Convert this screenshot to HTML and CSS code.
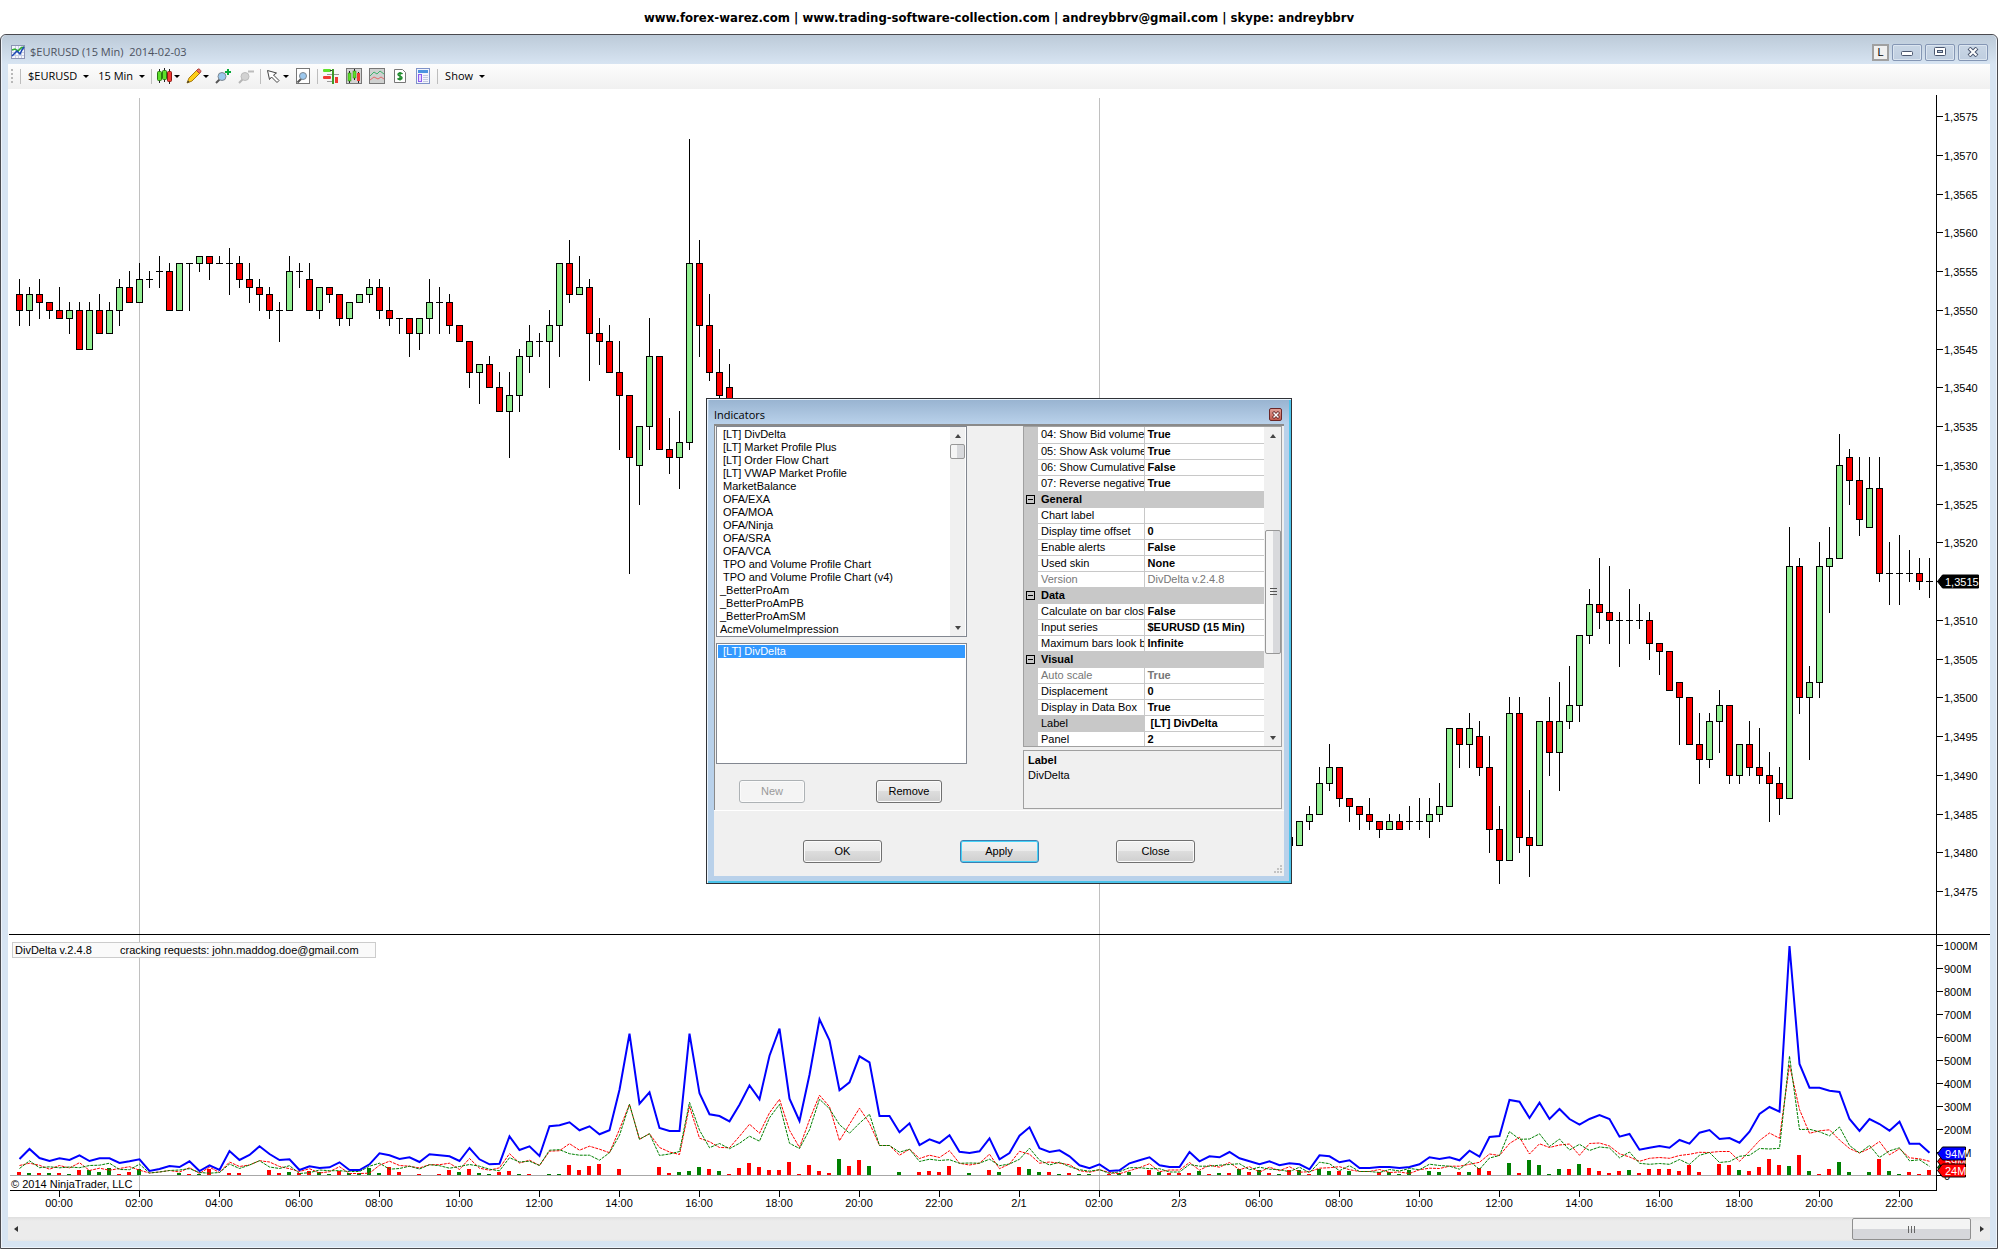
FILE: index.html
```html
<!DOCTYPE html>
<html lang="en">
<head>
<meta charset="utf-8">
<title>$EURUSD (15 Min) 2014-02-03</title>
<link rel="stylesheet" href="styles.css">
</head>
<body>
<header class="banner">www.forex-warez.com | www.trading-software-collection.com | andreybbrv@gmail.com | skype: andreybbrv</header>
<main class="window">
  <div class="titlebar">
    <svg class="app-icon" width="14" height="14" viewBox="0 0 14 14"><rect x=".5" y=".5" width="13" height="13" fill="#f4f6fc" stroke="#8d93b4"/><path d="M1 4.500H13M1 7.500H13M1 10.500H13M4.500 1V13M7.500 1V13M10.500 1V13" stroke="#c9cfe4"/><path d="M1 5l3-1 3 2 3-3 3-1" fill="none" stroke="#2eae2e" stroke-width="1.500"/><path d="M1 11l3-3 2-2 3 3 2-4 2-3" fill="none" stroke="#1b46b5" stroke-width="1.500"/></svg>
    <h1 class="title">$EURUSD (15 Min)&nbsp; 2014-02-03</h1>
    <div class="window-buttons">
      <button class="link-button" type="button">L</button>
      <button class="frame-button" type="button" aria-label="Minimize"><svg width="12" height="10" viewBox="0 0 12 10"><rect x=".5" y="4.500" width="11" height="4" rx="1" fill="#fff" stroke="#4a566e"/></svg></button>
      <button class="frame-button" type="button" aria-label="Maximize"><svg width="12" height="10" viewBox="0 0 12 10"><rect x=".5" y=".5" width="11" height="8" rx="1" fill="#fff" stroke="#4a566e"/><rect x="3.500" y="3.500" width="5" height="2" fill="#b9c9dc" stroke="#4a566e"/></svg></button>
      <button class="frame-button" type="button" aria-label="Close window"><svg width="12" height="10" viewBox="0 0 12 10"><path d="M2 1l8 8M10 1l-8 8" stroke="#4a566e" stroke-width="4"/><path d="M2.500 1.500l7 7M9.500 1.500l-7 7" stroke="#fff" stroke-width="2"/></svg></button>
    </div>
  </div>

  <div class="client">
    <div class="toolbar" role="toolbar">
      <span class="grip"></span><span class="sep"></span>
      <button class="tool text" type="button">$EURUSD<i class="arrow"></i></button>
      <button class="tool text" type="button">15 Min<i class="arrow"></i></button>
      <span class="sep"></span>
      <button class="tool menu" type="button" aria-label="Chart style"><svg width="16" height="16" viewBox="0 0 16 16"><path d="M2.500 1V15M7.500 0V14M12.500 1V16" stroke="#222"/><rect x=".5" y="3.500" width="4" height="9" rx="1" fill="#5ee02a" stroke="#2a7a12"/><rect x="5.500" y="2.500" width="4" height="9" rx="1" fill="#5ee02a" stroke="#2a7a12"/><rect x="10.500" y="3.500" width="4" height="10" rx="1" fill="#f03a34" stroke="#8e1712"/></svg><i class="arrow"></i></button>
      <button class="tool menu" type="button" aria-label="Drawing tools"><svg width="16" height="16" viewBox="0 0 16 16"><path d="M1 15l2-5L11 2l3 3-8 8z" fill="#ffcf1a" stroke="#a87a10"/><path d="M10.500 2.500L12 1c1-.6 3.400 1.200 2.800 2.800L13.500 5.500z" fill="#f0705a" stroke="#a8403a"/><path d="M1 15l1-2.600L3.600 14z" fill="#333"/></svg><i class="arrow"></i></button>
      <button class="tool" type="button" aria-label="Zoom in"><svg width="16" height="16" viewBox="0 0 16 16"><path d="M1 15l4-4" stroke="#555" stroke-width="2"/><circle cx="7" cy="8.500" r="4" fill="#9cc8ee" stroke="#7d8791"/><path d="M13 1v6M10 4h6" stroke="#08a83a" stroke-width="2"/></svg></button>
      <button class="tool" type="button" aria-label="Zoom out" disabled><svg width="16" height="16" viewBox="0 0 16 16"><path d="M1 15l4-4" stroke="#b5b5b5" stroke-width="2"/><circle cx="7" cy="8.500" r="4" fill="#d2d2d2" stroke="#bcbcbc"/><path d="M10 3.500h6" stroke="#bdbdbd" stroke-width="2"/></svg></button>
      <span class="sep"></span>
      <button class="tool menu" type="button" aria-label="Cursor"><svg width="16" height="16" viewBox="0 0 16 16"><path d="M1.500 2.500l9 2.500-3 2 5.500 5.500-2 2L5.500 9l-2 2.500z" fill="#fff" stroke="#444"/></svg><i class="arrow"></i></button>
      <button class="tool" type="button" aria-label="Preview"><svg width="16" height="16" viewBox="0 0 16 16"><rect x="1.500" y=".5" width="13" height="15" fill="#fff" stroke="#777"/><path d="M2.500 14.500l4-4" stroke="#555" stroke-width="2"/><circle cx="8" cy="8" r="3.500" fill="#9cc8ee" stroke="#7d8791"/></svg></button>
      <span class="sep"></span>
      <button class="tool" type="button" aria-label="Chart trader"><svg width="16" height="16" viewBox="0 0 16 16"><path d="M4 6.500H16M4 13.500H11" stroke="#999"/><rect x="0" y="1" width="8" height="3" rx="1" fill="#5ee02a"/><rect x="0" y="8" width="8" height="3" rx="1" fill="#f03a34"/><path d="M9 1h2v15h-2z" fill="#3f9a28"/><path d="M7 2.500h2" stroke="#333"/><rect x="12" y="9" width="3" height="6" fill="#f03a34"/></svg></button>
      <button class="tool" type="button" aria-label="Data series"><svg width="16" height="16" viewBox="0 0 16 16"><rect x=".5" y=".5" width="15" height="15" fill="#d4d4d4" stroke="#777"/><path d="M3.500 3v12M8.500 1v11M12.500 4v11" stroke="#222"/><rect x="2" y="5" width="3" height="8" fill="#5ee02a" stroke="#2a7a12" stroke-width=".5"/><rect x="7" y="3" width="3" height="7" fill="#5ee02a" stroke="#2a7a12" stroke-width=".5"/><rect x="11" y="5" width="3" height="8" fill="#f03a34"/></svg></button>
      <button class="tool" type="button" aria-label="Indicators"><svg width="16" height="16" viewBox="0 0 16 16"><rect x=".5" y=".5" width="15" height="15" fill="#cfd1d0" stroke="#777"/><path d="M1 8l4-4 3 2 3-3 4 3" fill="none" stroke="#3fb36d"/><path d="M1 12l4-3 4 2 3-2 3 2" fill="none" stroke="#e46b6b"/></svg></button>
      <button class="tool" type="button" aria-label="Strategies"><svg width="16" height="16" viewBox="0 0 16 16"><path d="M2.500 1.500h8l3 3v10h-11z" fill="#fff" stroke="#777"/><path d="M10.500 6C9 4.600 6 4.800 6 6.600c0 2 4 1.200 4 3.200 0 2-3 2-4.500.6M8 4v8.500" fill="none" stroke="#1e8a2c" stroke-width="1.500"/></svg></button>
      <button class="tool" type="button" aria-label="Properties"><svg width="16" height="16" viewBox="0 0 16 16"><rect x="1.500" y=".5" width="13" height="15" fill="#f3f5fd" stroke="#7f93c8"/><rect x="3" y="2" width="10" height="3" fill="#4b93e0"/><rect x="3.500" y="6.500" width="3" height="7" fill="#e6d8ff" stroke="#8c5cf0"/><path d="M8 7.500h5M8 9.500h5M8 11.500h5M8 13.500h5" stroke="#c2cadf"/></svg></button>
      <span class="sep"></span>
      <button class="tool text" type="button">Show<i class="arrow"></i></button>
    </div>

    <div class="chart" id="chart"></div>

    <div class="h-scroll">
      <i class="tri left"></i>
      <span class="h-track"><span class="h-thumb"></span></span>
      <i class="tri right"></i>
    </div>
  </div>

  <section class="dialog" role="dialog" aria-labelledby="dialog-title">
    <div class="dialog-title">
      <h2 id="dialog-title">Indicators</h2>
      <button class="dialog-close" type="button" aria-label="Close dialog"><svg width="8" height="8" viewBox="0 0 8 8"><path d="M1 1l6 6M7 1l-6 6" stroke="#5a2020" stroke-width="3"/><path d="M1.500 1.500l5 5M6.500 1.500l-5 5" stroke="#fff" stroke-width="1.500"/></svg></button>
    </div>
    <div class="dialog-body">
      <div class="panes">
        <div class="lists">
          <div class="listbox available">
            <ul role="listbox" aria-label="Available indicators">
              <li>&nbsp;[LT] DivDelta</li><li>&nbsp;[LT] Market Profile Plus</li><li>&nbsp;[LT] Order Flow Chart</li><li>&nbsp;[LT] VWAP Market Profile</li><li>&nbsp;MarketBalance</li><li>&nbsp;OFA/EXA</li><li>&nbsp;OFA/MOA</li><li>&nbsp;OFA/Ninja</li><li>&nbsp;OFA/SRA</li><li>&nbsp;OFA/VCA</li><li>&nbsp;TPO and Volume Profile Chart</li><li>&nbsp;TPO and Volume Profile Chart (v4)</li><li>_BetterProAm</li><li>_BetterProAmPB</li><li>_BetterProAmSM</li><li>AcmeVolumeImpression</li>
            </ul>
            <div class="v-scroll"><i class="tri up"></i><span class="v-track"><span class="v-thumb short"></span></span><i class="tri down"></i></div>
          </div>
          <div class="listbox applied">
            <ul role="listbox" aria-label="Applied indicators"><li class="selected">&nbsp;[LT] DivDelta</li></ul>
          </div>
          <div class="list-actions">
            <button class="button small" type="button" disabled>New</button>
            <button class="button small" type="button">Remove</button>
          </div>
        </div>
        <div class="props">
          <div class="grid-frame">
            <table class="grid">
              <tbody>
                <tr><td class="gutter"></td><th>04: Show Bid volume</th><td>True</td></tr>
                <tr><td class="gutter"></td><th>05: Show Ask volume</th><td>True</td></tr>
                <tr><td class="gutter"></td><th>06: Show Cumulative</th><td>False</td></tr>
                <tr><td class="gutter"></td><th>07: Reverse negative</th><td>True</td></tr>
                <tr class="group"><td class="gutter"><i class="minus"></i></td><th colspan="2">General</th></tr>
                <tr><td class="gutter"></td><th>Chart label</th><td></td></tr>
                <tr><td class="gutter"></td><th>Display time offset</th><td>0</td></tr>
                <tr><td class="gutter"></td><th>Enable alerts</th><td>False</td></tr>
                <tr><td class="gutter"></td><th>Used skin</th><td>None</td></tr>
                <tr class="locked plain"><td class="gutter"></td><th>Version</th><td>DivDelta v.2.4.8</td></tr>
                <tr class="group"><td class="gutter"><i class="minus"></i></td><th colspan="2">Data</th></tr>
                <tr><td class="gutter"></td><th>Calculate on bar close</th><td>False</td></tr>
                <tr><td class="gutter"></td><th>Input series</th><td>$EURUSD (15 Min)</td></tr>
                <tr><td class="gutter"></td><th>Maximum bars look back</th><td>Infinite</td></tr>
                <tr class="group"><td class="gutter"><i class="minus"></i></td><th colspan="2">Visual</th></tr>
                <tr class="locked"><td class="gutter"></td><th>Auto scale</th><td>True</td></tr>
                <tr><td class="gutter"></td><th>Displacement</th><td>0</td></tr>
                <tr><td class="gutter"></td><th>Display in Data Box</th><td>True</td></tr>
                <tr class="current"><td class="gutter"></td><th>Label</th><td>&nbsp;[LT] DivDelta</td></tr>
                <tr><td class="gutter"></td><th>Panel</th><td>2</td></tr>
              </tbody>
            </table>
            <div class="v-scroll"><i class="tri up"></i><span class="v-track"><span class="v-thumb long"></span></span><i class="tri down"></i></div>
          </div>
          <div class="hint"><b>Label</b><p>DivDelta</p></div>
        </div>
      </div>
      <div class="dialog-actions">
        <button class="button" type="button">OK</button>
        <button class="button default" type="button">Apply</button>
        <button class="button" type="button">Close</button>
        <svg class="size-grip" width="9" height="9" viewBox="0 0 9 9"><path d="M6 0h2v2h-2zM3 3h2v2h-2zM6 3h2v2h-2zM0 6h2v2h-2zM3 6h2v2h-2zM6 6h2v2h-2z" fill="#c3c3c3"/></svg>
      </div>
    </div>
  </section>
</main>
<script src="chart.js"></script>
</body>
</html>
```
FILE: styles.css
```css
* { box-sizing: border-box; }

body {
  margin: 0;
  min-height: 100vh;
  display: flex;
  flex-direction: column;
  background: #fff;
  color: #000;
  font: 11px/13px "Liberation Sans", Arial, sans-serif;
}

h1, h2, p, ul { margin: 0; padding: 0; font-size: inherit; font-weight: normal; }
ul { list-style: none; }
button { font: inherit; color: inherit; padding: 0; margin: 0; }
svg { display: block; }

.banner {
  height: 34px;
  line-height: 36px;
  text-align: center;
  font-family: "DejaVu Sans Condensed", "DejaVu Sans", sans-serif;
  font-weight: bold;
  font-size: 13px;
}

/* main window frame */
.window {
  position: relative;
  flex: 1;
  display: flex;
  flex-direction: column;
  padding: 0 7px 7px;
  border: 1px solid #4a4a4f;
  border-radius: 6px 6px 0 0;
  background: #d7e4f2;
  box-shadow: inset 0 0 0 1px #eef3fa;
}

.titlebar {
  display: flex;
  align-items: center;
  gap: 5px;
  height: 29px;
  margin: 0 -6px;
  padding: 5px 8px 0 9px;
  border-radius: 5px 5px 0 0;
  background: linear-gradient(#bccad8, #d7e4f2);
  color: #4c5260;
}
.title { flex: 1; font: 11px/16px "Open Sans", "Noto Sans", sans-serif; }

.window-buttons { display: flex; align-items: center; gap: 3px; }
.link-button {
  width: 17px;
  height: 17px;
  border: 2px solid #a0a0a0;
  background: #f0f0f0;
  color: #000;
}
.frame-button {
  display: grid;
  place-items: center;
  width: 30px;
  height: 17px;
  border: 1px solid #8496b4;
  border-radius: 2px;
  background: linear-gradient(#c9d6e5, #bfcee0);
  box-shadow: inset 0 0 0 1px #dbe5f0;
}

.client { flex: 1; display: flex; flex-direction: column; background: #fff; }

/* toolbar */
.toolbar {
  display: flex;
  align-items: center;
  height: 25px;
  padding-bottom: 1px;
  background: linear-gradient(#fdfdfd, #f0f0f0);
  font: 11px/16px "Open Sans", "Noto Sans", sans-serif;
}
.grip { width: 2px; height: 14px; margin: 0 5px 0 3px; background: repeating-linear-gradient(#b8b8b8 0 2px, transparent 2px 4px); }
.sep { width: 1px; height: 15px; margin: 0 2px; background: #bdbdbd; }
.tool { display: flex; align-items: center; height: 22px; padding: 0 4px 0 3px; border: 0; background: none; }
.tool.menu { gap: 1px; padding: 0 3px; }
.tool.text { gap: 6px; padding: 0 4px 0 5px; }
.arrow { border: 3px solid transparent; border-top-color: #000; border-bottom: 0; }

.chart { flex: 1; min-height: 700px; overflow: hidden; }

/* scroll bars */
.tri { width: 0; height: 0; border: 3px solid transparent; }
.tri.left { border-right: 4px solid #333; border-left: 0; }
.tri.right { border-left: 4px solid #333; border-right: 0; }
.tri.up { border-bottom: 4px solid #444; border-top: 0; }
.tri.down { border-top: 4px solid #444; border-bottom: 0; }

.h-scroll {
  display: flex;
  align-items: center;
  gap: 9px;
  height: 24px;
  padding: 0 6px;
  background: linear-gradient(#dedede, #ececec 4px 22px, #e6e6e6);
}
.h-track { flex: 1; display: flex; justify-content: flex-end; }
.h-thumb {
  width: 119px;
  height: 22px;
  border: 1px solid #8f8f8f;
  border-radius: 2px;
  background:
    repeating-linear-gradient(90deg, #666 0 1px, transparent 1px 3px) center / 8px 7px no-repeat,
    linear-gradient(#f4f4f4 50%, #d6d7db 50%);
}
.v-scroll {
  display: flex;
  flex-direction: column;
  align-items: center;
  gap: 6px;
  width: 15px;
  padding: 7px 0 6px;
  background: #f0f0f0;
}
.v-track { flex: 1; width: 100%; }
.v-thumb { display: block; border: 1px solid #979797; border-radius: 2px; background: linear-gradient(90deg, #f5f5f5 50%, #d8d9dc 50%); }
.v-thumb.short { height: 15px; }
.v-thumb.long {
  height: 124px;
  margin-top: 86px;
  background:
    repeating-linear-gradient(#555 0 1px, transparent 1px 3px) center / 7px 8px no-repeat,
    linear-gradient(90deg, #f5f5f5 50%, #d8d9dc 50%);
}

/* indicators dialog */
.dialog {
  position: absolute;
  top: 363px;
  left: calc(50% - 293px);
  width: 586px;
  padding: 0 7px 7px;
  border: 1px solid #2f3237;
  background: #b9d1ea;
  box-shadow: inset 1px 1px 0 #eaf4fd, inset -2px -2px 0 #4cc3ea;
}
.dialog-title {
  display: flex;
  align-items: center;
  justify-content: space-between;
  height: 24px;
  margin: 1px -5px 0;
  padding: 5px 7px 0 5px;
  background: linear-gradient(#99b4d1, #b9d1ea);
  font: 11px/16px "Open Sans", "Noto Sans", sans-serif;
}
.dialog-close {
  display: grid;
  place-items: center;
  width: 13px;
  height: 13px;
  border: 1px solid #6b2626;
  border-radius: 2px;
  background: linear-gradient(#e0a097, #c25a4c);
}
.dialog-body { background: #f0f0f0; }
.panes {
  display: flex;
  justify-content: space-between;
  padding: 0 2px 0 1px;
  border: solid #8a8a8a;
  border-width: 2px 0 0 1px;
}
.lists { width: 251px; }
.listbox { display: flex; border: 1px solid #828790; background: #fff; }
.listbox ul { flex: 1; padding: 1px; }
.listbox li { padding-left: 2px; height: 13px; white-space: nowrap; }
.available { height: 211px; padding: 0 1px 0 0; }
.applied { height: 121px; margin-top: 6px; }
.applied li.selected { background: #39f; color: #fff; }
.list-actions { display: flex; gap: 71px; padding: 16px 0 6px 23px; }

.button {
  width: 79px;
  height: 23px;
  border: 1px solid #707070;
  border-radius: 3px;
  background: linear-gradient(#f2f2f2, #ebebeb 50%, #dddddd 50%, #cfcfcf);
  box-shadow: inset 0 0 0 1px #fbfbfb;
}
.button.small { width: 66px; }
.button:disabled { border-color: #adb2b5; background: #f4f4f4; color: #9a9a9a; }
.button.default { border-color: #3c7fb1; box-shadow: inset 0 0 0 1px #46d2f8; }

.props { width: 259px; display: flex; flex-direction: column; gap: 3px; padding-bottom: 1px; }
.grid-frame { display: flex; height: 321px; overflow: hidden; border: 1px solid #a0a0a0; }
.grid-frame .v-scroll { width: 16px; margin-left: 1px; }
.grid { flex: 1; table-layout: fixed; border-collapse: collapse; width: 240px; }
.grid tr { height: 16px; }
.grid th, .grid td {
  height: 16px;
  padding: 0 0 0 3px;
  border-bottom: 1px solid #c8c8c8;
  background: #fff;
  text-align: left;
  line-height: 13px;
  white-space: nowrap;
  overflow: hidden;
}
.grid th { width: 106px; font-weight: normal; border-right: 1px solid #c8c8c8; }
.grid td { font-weight: bold; }
.grid .gutter { width: 14px; padding: 0 0 0 2px; background: #c8c8c8; }
.grid .group th { background: #c8c8c8; font-weight: bold; }
.grid .current th { background: #c8c8c8; }
.grid .locked th, .grid .locked td { color: #767676; }
.grid .plain td { font-weight: normal; }
.minus {
  display: block;
  width: 9px;
  height: 9px;
  border: 1px solid #000;
  background: linear-gradient(#000, #000) center / 5px 1px no-repeat;
}
.hint { height: 59px; padding: 3px 4px; border: 1px solid #a0a0a0; }
.hint p { margin-top: 2px; }

.dialog-actions {
  position: relative;
  display: flex;
  justify-content: space-between;
  padding: 29px 89px 13px;
  border-top: 1px solid #fff;
}
.size-grip { position: absolute; right: 1px; bottom: 2px; }

/* chart drawing */
.line { stroke: #000; fill: none; shape-rendering: crispEdges; }
.rule { stroke: #c0c0c0; shape-rendering: crispEdges; }
.zero { stroke: #a8a8a8; shape-rendering: crispEdges; }
.up-body { fill: #90ee90; stroke: #000; shape-rendering: crispEdges; }
.down-body { fill: #f00; stroke: #000; shape-rendering: crispEdges; }
.buy { fill: #008000; }
.sell { fill: #f00; }
.total-line { fill: none; stroke: #00f; stroke-width: 2; }
.ask-line { fill: none; stroke: #f00; stroke-dasharray: 3 1; }
.bid-line { fill: none; stroke: #008000; stroke-dasharray: 3 1; }
.axis-text { font: 11px "Liberation Sans", Arial, sans-serif; fill: #000; }
.tag-text { font: 11px "Liberation Sans", Arial, sans-serif; fill: #fff; }
.middle { text-anchor: middle; }
.note-box { fill: #fafafa; stroke: #ccc; shape-rendering: crispEdges; }
.paper { fill: #fff; }
.tag { stroke: #000; }
```
FILE: chart.js
```js
// Bars: [index, high, body top, body bottom, low, kind]; prices are pips above 1,3400.
// kind: g = up, r = down, d = open equals close.
const bars = `
0 154 152 150 148 r|1 153 152 150 148 g|2 154 152 151 149 r|3 151 151 150 149 r|4 153 150 149 149 r|5 151 150 149 147 g
6 151 150 145 145 r|7 151 150 145 145 g|8 152 150 147 147 r|9 151 150 147 147 g|10 154 153 150 148 g|11 155 153 151 151 r
12 156 154 151 151 g|13 155 154 154 153 d|14 157 155 155 153 d|15 156 155 150 150 r|16 156 156 150 150 g|17 156 156 156 150 d
18 157 157 156 155 g|19 157 157 156 154 r|20 157 156 156 156 d|21 158 156 156 152 d|22 157 156 154 153 r|23 156 154 153 151 r
24 154 153 152 150 r|25 153 152 150 149 r|26 151 150 150 146 d|27 157 155 150 150 g|28 156 155 155 153 d|29 156 154 150 150 r
30 153 153 150 149 g|31 153 153 152 151 r|32 152 152 149 148 r|33 151 151 149 148 g|34 152 152 151 151 g|35 154 153 152 151 g
36 154 153 150 149 r|37 153 150 149 148 r|38 149 149 149 147 d|39 149 149 147 144 r|40 149 149 147 145 g|41 154 151 149 147 g
42 153 151 151 147 d|43 152 151 148 147 r|44 148 148 146 146 r|45 146 146 142 140 r|46 143 143 142 138 g|47 144 143 140 140 r
48 142 140 137 137 r|49 142 139 137 131 g|50 145 144 139 137 g|51 148 146 144 142 g|52 147 146 146 144 d|53 150 148 146 140 g
54 156 156 148 144 g|55 159 156 152 151 r|56 157 153 152 152 g|57 154 153 147 141 r|58 149 147 146 143 r|59 148 146 142 142 r
60 146 142 139 132 r|61 139 139 131 116 r|62 135 135 130 125 g|63 149 144 135 132 g|64 144 144 132 132 r|65 136 132 131 129 r
66 137 133 131 127 g|67 172 156 133 132 g|68 159 156 148 144 r|69 152 148 142 141 r|70 145 142 139 138 r|71 143 140 135 135 r
127 82 82 81 81 g|128 84 84 81 81 g|129 86 85 84 83 g|130 91 89 85 85 g|131 94 91 89 88 g|132 91 91 87 86 r|133 87 87 86 84 r
134 86 86 85 83 r|135 87 85 84 83 r|136 84 84 83 82 r|137 85 84 83 83 g|138 85 84 83 83 r|139 86 84 84 83 d|140 87 84 84 83 d
141 87 85 84 82 g|142 89 86 85 84 g|143 96 96 86 86 g|144 96 96 94 91 r|145 98 96 94 91 g|146 97 95 91 90 r|147 95 91 83 80 r
148 86 83 79 76 r|149 100 98 79 79 g|150 100 98 82 80 r|151 88 82 81 77 r|152 97 97 81 81 g|153 100 97 93 90 r|154 102 97 93 88 g
155 104 99 97 96 g|156 108 108 99 97 g|157 114 112 108 107 g|158 118 112 111 109 r|159 117 111 110 107 r|160 111 110 110 104 d
161 114 110 110 107 d|162 112 110 110 109 d|163 111 110 107 105 r|164 107 107 106 103 r|165 106 106 101 101 r|166 102 102 100 94 r
167 100 100 94 94 r|168 98 94 92 89 r|169 98 97 92 91 g|170 101 99 97 93 g|171 99 99 90 89 r|172 94 94 90 89 g|173 97 94 91 90 r
174 96 91 90 89 r|175 93 90 89 84 r|176 91 89 87 85 r|177 122 117 87 87 g|178 118 117 100 98 r|179 104 102 100 92 g
180 120 117 102 100 g|181 122 118 117 111 g|182 134 130 118 118 g|183 132 131 128 125 r|184 131 128 123 121 r|185 131 127 122 122 g
186 131 127 116 115 r|187 120 116 116 112 d|188 121 116 116 112 d|189 119 116 116 115 d|190 118 116 115 114 r|191 118 115 115 113 d`
  .trim().split(/[|\n]/).map(s => s.split(' '));

// Volume per bar and its ask/bid difference, in steps of 1.447M.
const total = [48,78,51,42,50,45,59,42,50,50,36,41,47,12,18,27,24,41,12,29,15,72,45,60,86,63,45,47,15,26,21,23,38,15,15,32,65,59,48,53,39,62,59,56,42,81,47,32,34,116,
75,86,57,146,149,158,134,146,122,134,256,424,214,248,141,132,132,424,245,182,177,161,211,269,227,358,439,229,162,301,467,404,254,278,356,338,177,177,128,155,90,107,96,119,70,66,71,110,47,66,
118,143,80,69,74,56,29,20,32,12,14,35,44,53,29,24,24,69,41,56,53,69,50,41,32,41,29,35,32,17,59,56,38,44,21,21,24,24,21,24,32,53,48,53,44,73,
55,114,117,225,220,171,217,168,198,168,151,168,180,168,115,123,76,82,87,82,105,94,127,135,108,111,97,130,183,204,190,687,333,262,262,253,249,168,132,168,153,133,160,94,94,67];
const delta = [-9,7,-7,7,-7,3,-15,15,9,21,-3,-9,18,0,0,0,6,-3,3,-18,0,-6,-6,0,0,-15,-6,9,-6,-12,9,3,-12,6,6,21,6,-24,-9,0,-3,0,-3,-15,9,-18,6,3,-9,-12,
3,-3,0,3,3,-30,-15,-27,-33,0,-18,0,0,0,-24,-6,9,12,24,-18,12,-3,-21,-36,-24,-15,-15,-39,-3,-30,-12,-6,48,-27,-45,27,0,0,9,0,-9,-12,-9,-27,0,6,0,-15,9,0,
-24,18,9,-9,3,-6,3,3,0,-3,6,9,0,-15,9,-6,-6,-6,12,-3,6,-6,18,-9,15,-6,3,-15,15,-3,18,12,-12,12,0,0,-9,9,3,15,0,12,9,0,-9,9,
-21,-12,0,36,-6,45,30,3,18,-18,33,-21,-12,-6,-12,15,-6,-18,-18,-18,-12,-30,-9,0,-33,-30,15,-12,-24,-48,-30,27,-60,12,-3,-18,39,9,0,9,-48,12,3,-9,-3,-15];

const times = ['00:00','02:00','04:00','06:00','08:00','10:00','12:00','14:00','16:00','18:00','20:00','22:00','2/1','02:00','2/3','06:00','08:00','10:00','12:00','14:00','16:00','18:00','20:00','22:00'];

function draw() {
  const host = document.getElementById('chart');
  host.textContent = '';
  const W = host.clientWidth, H = host.clientHeight;
  const axisX = W - 54, split = H - 283, zero = H - 42, floor = H - 27;
  const pip = split / 109;
  const xOf = i => W - 61 - (191 - i) * 10;
  const yOf = p => Math.round(27 + (175 - p) * pip);
  const vOf = v => zero - v / 3;
  const out = [];
  const seg = (cls, x1, y1, x2, y2) => out.push(`<path class="${cls}" d="M${x1 + .5} ${y1 + .5}L${x2 + .5} ${y2 + .5}"/>`);
  const text = (cls, x, y, s) => out.push(`<text class="${cls}" x="${x}" y="${y}">${s}</text>`);

  [12, 108].forEach(i => seg('rule', xOf(i), 8, xOf(i), floor));

  for (const [i, hi, top, bot, lo, kind] of bars) {
    const x = xOf(+i), yt = yOf(top), yb = yOf(bot);
    out.push(`<path class="line" d="M${x + .5} ${yOf(hi)}V${yOf(lo) + 1}"/>`);
    if (kind === 'd') out.push(`<path class="line" d="M${x - 3} ${yt + .5}H${x + 4}"/>`);
    else out.push(`<rect class="${kind === 'g' ? 'up' : 'down'}-body" x="${x - 2.5}" y="${yt + .5}" width="6" height="${yb - yt}"/>`);
  }

  seg('zero', 1, zero, axisX, zero);
  delta.forEach((d, i) => {
    if (d) out.push(`<rect class="${d > 0 ? 'buy' : 'sell'}" x="${xOf(i) - 2}" y="${zero - Math.round(Math.abs(d) / 3)}" width="4" height="${Math.round(Math.abs(d) / 3)}"/>`);
  });
  const curve = (cls, f) => out.push(`<polyline class="${cls}" points="${total.map((t, i) => `${xOf(i) + .5},${vOf(f(t, delta[i])).toFixed(1)}`).join(' ')}"/>`);
  curve('ask-line', (t, d) => (t - d) / 2);
  curve('bid-line', (t, d) => (t + d) / 2);
  curve('total-line', t => t);

  seg('line', 0, split, W, split);
  seg('line', axisX, 5, axisX, floor);
  seg('line', 1, floor, axisX, floor);

  for (let p = 175; p >= 75; p -= 5) {
    seg('line', axisX, yOf(p), axisX + 6, yOf(p));
    if (p !== 115) text('axis-text', axisX + 8, yOf(p) + 5, '1,3' + (400 + p));
  }
  for (let m = 0; m <= 1000; m += 100) {
    const y = Math.round(zero - m * .23);
    seg('line', axisX, y, axisX + 6, y);
    text('axis-text', axisX + 8, y + 5, m ? m + 'M' : '0');
  }
  times.forEach((t, k) => {
    const x = xOf(4 + k * 8);
    seg('line', x, floor, x, floor + 6);
    text('axis-text middle', x, floor + 17, t);
  });

  const tag = (y, w, fill, s) => {
    out.push(`<path class="tag" fill="${fill}" d="M${axisX + 1.5} ${y + .5}l5 -6.500h${w}v13h-${w}z"/>`);
    if (s) text('tag-text', axisX + 9, y + 5, s);
  };
  tag(yOf(115), 36, '#000', '1,3515');
  tag(zero - 8, 23, '#008000', '');
  tag(zero - 14, 23, '#f00', '59M');
  tag(zero - 5, 23, '#f00', '24M');
  tag(zero - 22, 23, '#00f', '94M');

  out.push(`<rect class="note-box" x="4.500" y="${split + 8.5}" width="363" height="15"/>`);
  text('axis-text', 7, split + 20, 'DivDelta v.2.4.8');
  text('axis-text', 112, split + 20, 'cracking requests: john.maddog.doe@gmail.com');
  out.push(`<rect class="paper" x="2" y="${zero + 1}" width="127" height="14"/>`);
  text('axis-text', 3, zero + 13, '© 2014 NinjaTrader, LLC');

  host.innerHTML = `<svg width="${W}" height="${H}" viewBox="0 0 ${W} ${H}">${out.join('')}</svg>`;
}
draw();
window.addEventListener('resize', draw);
```
